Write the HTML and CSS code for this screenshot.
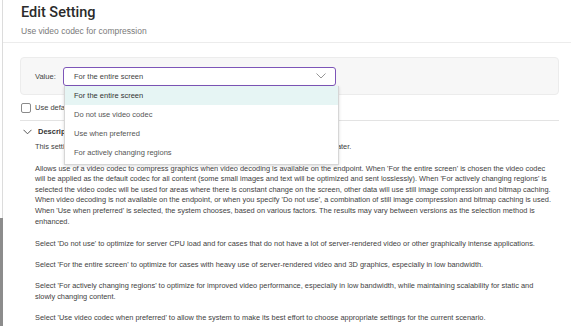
FILE: index.html
```html
<!DOCTYPE html>
<html>
<head>
<meta charset="utf-8">
<link rel="stylesheet" href="styles.css">
</head>
<body>
<div class="page">
  <div class="header">
    <h1 class="title">Edit Setting</h1>
    <div class="subtitle">Use video codec for compression</div>
  </div>
  <div class="content">
    <div class="value-panel">
      <span class="value-label">Value:</span>
      <div class="select-wrap">
        <div class="select">
          <span>For the entire screen</span>
          <svg class="chev" width="10" height="6" viewBox="0 0 10 6"><path d="M0.5 0.5 L5 5 L9.5 0.5" fill="none" stroke="#8a8a8a" stroke-width="0.9"/></svg>
        </div>
        <ul class="menu">
          <li class="active">For the entire screen</li>
          <li>Do not use video codec</li>
          <li>Use when preferred</li>
          <li>For actively changing regions</li>
        </ul>
      </div>
    </div>
    <div class="check-row">
      <span class="checkbox"></span>
      <span class="check-label">Use default value: For the entire screen</span>
    </div>
    <div class="desc-head">
      <svg class="desc-chev" width="9" height="6" viewBox="0 0 9 6"><path d="M0.5 0.8 L4.5 4.8 L8.5 0.8" fill="none" stroke="#555" stroke-width="1"/></svg>
      <span class="desc-title">Description</span>
    </div>
    <div class="desc-body">
      <p>This setting applies to VDA for Server OS and VDA for Desktop OS 7.6 Feature Pack 3 and later.</p>
      <p>Allows use of a video codec to compress graphics when video decoding is available on the endpoint. When 'For the entire screen' is chosen the video codec<br>will be applied as the default codec for all content (some small images and text will be optimized and sent losslessly). When 'For actively changing regions' is<br>selected the video codec will be used for areas where there is constant change on the screen, other data will use still image compression and bitmap caching.<br>When video decoding is not available on the endpoint, or when you specify 'Do not use', a combination of still image compression and bitmap caching is used.<br>When 'Use when preferred' is selected, the system chooses, based on various factors. The results may vary between versions as the selection method is<br>enhanced.</p>
      <p>Select 'Do not use' to optimize for server CPU load and for cases that do not have a lot of server-rendered video or other graphically intense applications.</p>
      <p>Select 'For the entire screen' to optimize for cases with heavy use of server-rendered video and 3D graphics, especially in low bandwidth.</p>
      <p>Select 'For actively changing regions' to optimize for improved video performance, especially in low bandwidth, while maintaining scalability for static and<br>slowly changing content.</p>
      <p>Select 'Use video codec when preferred' to allow the system to make its best effort to choose appropriate settings for the current scenario.</p>
    </div>
  </div>
  <div class="edge-bar"></div>
</div>
</body>
</html>
```
FILE: styles.css
```css
html, body {
  margin: 0;
  padding: 0;
  background: #fff;
}
body {
  width: 571px;
  height: 326px;
  overflow: hidden;
  font-family: "Liberation Sans", Arial, sans-serif;
  color: #333;
}
.page {
  position: relative;
  margin-left: 2px;
  border-left: 1px solid #dcdcdc;
  height: 326px;
}
.edge-bar {
  position: absolute;
  left: -3px;
  top: 218px;
  width: 3px;
  bottom: 0;
  background: #8c8c8c;
}
.header {
  height: 43px;
  box-sizing: border-box;
  padding: 3px 0 0 18px;
  border-bottom: 1px solid #ececec;
}
.title {
  margin: 0;
  font-family: Roboto, sans-serif;
  font-weight: 500;
  font-size: 14.5px;
  line-height: 20px;
  color: #2b2b2b;
}
.subtitle {
  margin-top: 3px;
  font-size: 8.5px;
  line-height: 11px;
  color: #7a7a7a;
}
.content {
  padding: 0 12px 0 17px;
}
.value-panel {
  margin-top: 14px;
  height: 38px;
  box-sizing: border-box;
  background: #f7f7f7;
  border: 1px solid #ececec;
  border-radius: 4px;
  display: flex;
  align-items: center;
  padding-left: 14px;
}
.value-label {
  width: 28px;
  font-size: 7.5px;
  color: #444;
}
.select-wrap {
  position: relative;
  width: 273px;
}
.select {
  height: 19px;
  box-sizing: border-box;
  border: 1px solid #7d55b8;
  border-radius: 3px;
  background: #fff;
  display: flex;
  align-items: center;
  justify-content: space-between;
  padding: 0 9px 0 10px;
  font-size: 7.5px;
  color: #444;
}
.chev {
  display: block;
}
.menu {
  position: absolute;
  left: 1px;
  top: 19px;
  width: 273px;
  margin: 0;
  padding: 0 0 2px;
  list-style: none;
  background: #fff;
  border: 1px solid #d6d6d6;
  border-top: none;
  box-shadow: 0 1px 3px rgba(0,0,0,0.15);
  z-index: 5;
}
.menu li {
  height: 19px;
  line-height: 19px;
  padding-left: 9px;
  font-size: 7.5px;
  color: #555;
}
.menu li.active {
  background: #e6f5f4;
  color: #333;
}
.check-row {
  margin-top: 7px;
  display: flex;
  align-items: center;
  height: 11px;
  padding-bottom: 7px;
  border-bottom: 1px solid #e3e3e3;
}
.checkbox {
  border: 1px solid #8a8a8a;
  border-radius: 2px;
  box-sizing: border-box;
  margin-left: 1px;
  margin-right: 4px;
  width: 10px;
  height: 10px;
}
.check-label {
  font-size: 7.5px;
  color: #444;
}
.desc-head {
  margin-top: 5px;
  display: flex;
  align-items: center;
  height: 11px;
  padding-left: 3px;
}
.desc-chev {
  margin-right: 6px;
}
.desc-title {
  font-size: 7.5px;
  font-weight: bold;
  color: #333;
}
.desc-body {
  padding: 0 0 0 15px;
  font-size: 7.4px;
  line-height: 10.6px;
  color: #3e3e3e;
}
.desc-body p {
  margin: 0 0 10.6px;
}
.desc-body p:first-child {
  margin-top: 5px;
  margin-bottom: 11px;
}
.desc-body p:nth-child(2) {
  margin-bottom: 11.6px;
}
```
